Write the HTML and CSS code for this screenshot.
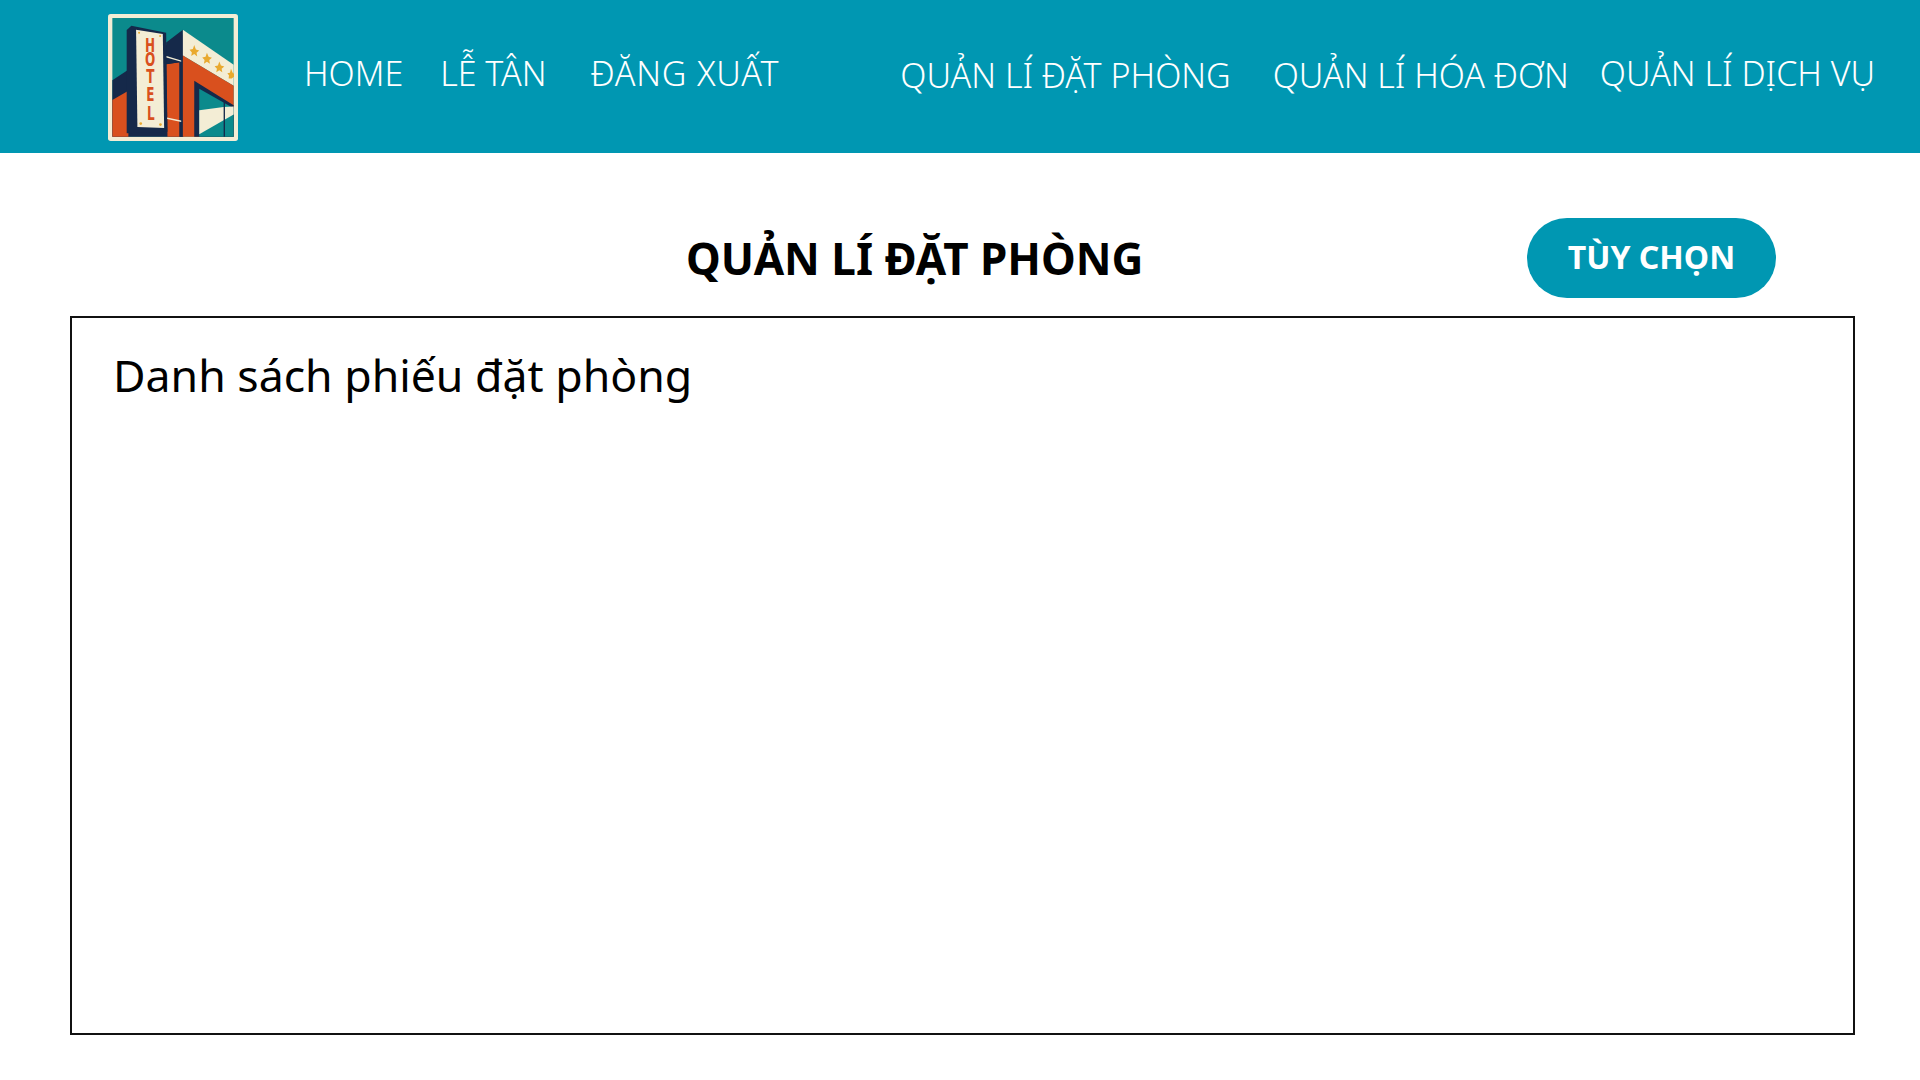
FILE: index.html
```html
<!DOCTYPE html>
<html lang="vi">
<head>
<meta charset="utf-8">
<title>Quản lí đặt phòng</title>
<link rel="stylesheet" href="styles.css">
</head>
<body>
<header class="topbar">
  <svg class="logo" viewBox="54 40 389 380" aria-label="Hotel">
    <rect x="54" y="40" width="389" height="380" rx="8" fill="#f3edd5"/>
    <rect x="67" y="52" width="363" height="355" fill="#0b8a8c"/>
    <polygon points="67,238 125,200 280,100 280,407 67,407" fill="#15294a"/>
    <polygon points="67,297 115,270 115,407 67,407" fill="#d9501e"/>
    <polygon points="228,190 268,184 268,407 232,407" fill="#d9501e"/>
    <polygon points="228,125 278,87 278,407 268,407 268,184 228,190" fill="#15294a"/>
    <polygon points="278,87 430,192 430,255 278,164" fill="#f3edd5"/>
    <polygon points="278,164 430,255 430,407 278,407" fill="#d9501e"/>
    <polygon points="312,240 430,313 430,407 312,407" fill="#15294a"/>
    <polygon points="327,264 430,322 430,407 327,407" fill="#0b8a8c"/>
    <polygon points="327,328 400,318 430,317 430,341 327,400" fill="#f3edd5"/>
    <rect x="400" y="300" width="4" height="107" fill="#15294a"/>
    <polygon points="110,88 124,75 228,96 232,392 110,397" fill="#15294a"/>
    <polygon points="138,87 218,100 222,381 142,378" fill="#f3edd5"/>
    <polygon points="229,166 273,179 273,183 229,170" fill="#f3edd5"/>
    <polygon points="231,350 273,359 273,363 231,354" fill="#f3edd5"/>
    <g fill="#e9a92e">
      <circle cx="147" cy="96" r="3"/><circle cx="210" cy="106" r="3"/>
      <circle cx="152" cy="368" r="4"/><circle cx="211" cy="371" r="4"/>
      <polygon points="312,133 317,146 327,149 319,156 321,167 312,160 303,166 305,155 298,147 308,145"/>
      <polygon points="350,156 355,168 365,171 357,178 359,189 350,183 341,189 343,178 336,170 346,168"/>
      <polygon points="387,182 392,194 402,197 394,204 396,214 387,208 378,214 380,204 373,196 383,194"/>
      <polygon points="422,204 427,216 431,219 431,228 424,233 415,233 416,223 411,217 419,216"/>
    </g>
    <text class="logo-letter" transform="scale(0.62 1)"><tspan x="290" y="155">H</tspan><tspan x="290" y="197">O</tspan><tspan x="292" y="247">T</tspan><tspan x="292" y="300">E</tspan><tspan x="294" y="356">L</tspan></text>
  </svg>
  <nav class="nav nav-left">
    <a>HOME</a>
    <a class="nav-desk">LỄ TÂN</a>
    <a class="nav-logout">ĐĂNG XUẤT</a>
  </nav>
  <nav class="nav nav-right">
    <a class="low">QUẢN LÍ ĐẶT PHÒNG</a>
    <a class="low nav-invoice">QUẢN LÍ HÓA ĐƠN</a>
    <a class="nav-service">QUẢN LÍ DỊCH VỤ</a>
  </nav>
</header>
<main class="content">
  <div class="title-row">
    <h1 class="title">QUẢN LÍ ĐẶT PHÒNG</h1>
    <button class="option-btn">TÙY CHỌN</button>
  </div>
  <section class="panel">
    <h2 class="panel-title">Danh sách phiếu đặt phòng</h2>
  </section>
</main>
</body>
</html>
```
FILE: styles.css
```css
* { box-sizing: border-box; }
html, body { margin: 0; padding: 0; }
body {
  width: 1920px;
  height: 1080px;
  overflow: hidden;
  background: #fff;
  font-family: "Noto Sans", "Open Sans", sans-serif;
  color: #000;
}
.topbar {
  height: 153px;
  background: #0097b2;
  display: flex;
  align-items: flex-start;
  padding: 14px 0 0 108px;
}
.logo { width: 130px; height: 127px; flex: none; }
.logo-letter {
  font-family: "DejaVu Sans", sans-serif;
  font-weight: 700;
  font-size: 58px;
  fill: #d9501e;
  text-anchor: middle;
}
.nav {
  display: flex;
  color: #fff;
  font-size: 34px;
  font-weight: 300;
  line-height: 45px;
  white-space: nowrap;
}
.nav a { display: block; }
.nav-left { margin: 37px 0 0 66px; }
.nav-desk { margin-left: 37px; }
.nav-logout { margin-left: 44px; letter-spacing: 0.8px; }
.nav-right { margin: 37px 0 0 121px; }
.low { position: relative; top: 2px; }
.nav-invoice { margin-left: 42px; }
.nav-service { margin-left: 31px; }
.content { padding: 0 65px 0 70px; }
.title-row {
  height: 163px;
  display: flex;
  align-items: center;
  padding-top: 47px;
}
.title {
  margin: 0 0 0 616px;
  font-size: 44px;
  line-height: 60px;
  font-weight: 700;
  white-space: nowrap;
}
.option-btn {
  margin-left: auto;
  margin-right: 79px;
  width: 249px;
  height: 80px;
  padding: 0 0 3px;
  border: 0;
  border-radius: 40px;
  background: #0097b2;
  color: #fff;
  font: 700 32px/45px "Noto Sans", sans-serif;
}
.panel {
  height: 719px;
  border: 2px solid #111;
  padding: 27px 41px;
}
.panel-title {
  margin: 0;
  font-size: 44.6px;
  line-height: 60px;
  font-weight: 400;
}
```
